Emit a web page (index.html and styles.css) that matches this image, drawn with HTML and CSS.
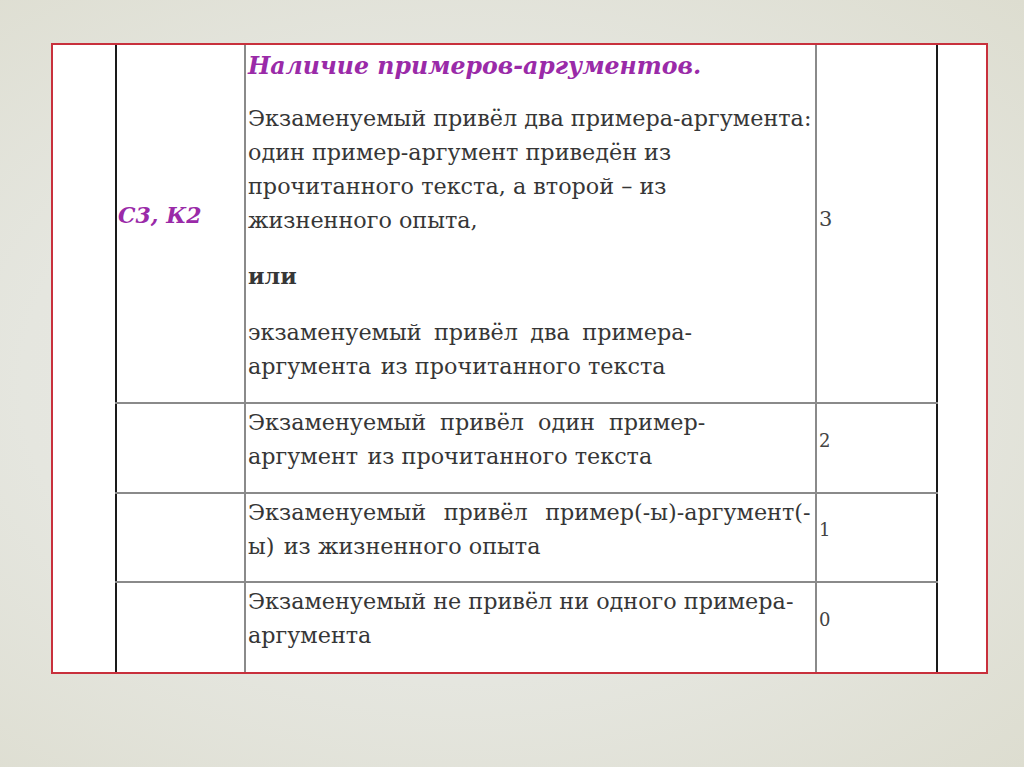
FILE: index.html
```html
<!DOCTYPE html>
<html lang="ru">
<head>
<meta charset="utf-8">
<title>Критерии</title>
<link rel="stylesheet" href="styles.css">
</head>
<body>
<div class="slide">
  <div class="frame">
    <div class="side"></div>
    <table class="crit">
      <colgroup>
        <col class="c-code">
        <col class="c-text">
        <col class="c-score">
      </colgroup>
      <tr class="r1">
        <td class="code">С3, К2</td>
        <td class="text">
          <div class="head">Наличие примеров-аргументов.</div>
          <p>Экзаменуемый привёл два примера-аргумента:<br>один пример-аргумент приведён из<br>прочитанного текста, а второй – из<br>жизненного опыта,</p>
          <p class="or">или</p>
          <p><span class="ws-a">экзаменуемый привёл два примера-</span><br><span class="ws-s">аргумента из</span> прочитанного текста</p>
        </td>
        <td class="score big">3</td>
      </tr>
      <tr class="r2">
        <td></td>
        <td class="text"><p><span class="ws-b">Экзаменуемый привёл один пример-</span><br><span class="ws-s">аргумент из</span> прочитанного текста</p></td>
        <td class="score">2</td>
      </tr>
      <tr class="r3">
        <td></td>
        <td class="text"><p><span class="ws-c">Экзаменуемый привёл пример(-ы)-аргумент(-</span><br><span class="ws-s">ы) из</span> жизненного опыта</p></td>
        <td class="score">1</td>
      </tr>
      <tr class="r4">
        <td></td>
        <td class="text"><p>Экзаменуемый не привёл ни одного примера-<br>аргумента</p></td>
        <td class="score">0</td>
      </tr>
    </table>
    <div class="side"></div>
  </div>
</div>
</body>
</html>
```

FILE: styles.css
```css
html, body {
  margin: 0;
  padding: 0;
}
body {
  width: 1024px;
  height: 767px;
  overflow: hidden;
  background: radial-gradient(ellipse at 45% 50%, #e9e9e7 0%, #e5e6df 55%, #ddddd0 100%);
  font-family: "DejaVu Serif", "Liberation Serif", serif;
  color: #363636;
}
.slide {
  padding: 43px 0 0 51px;
}
.frame {
  display: flex;
  width: 933px;
  height: 627px;
  border: 2px solid #c8303c;
  background: #fff;
  overflow: hidden;
}
.side {
  flex: 1;
}
.frame .side:first-child {
  flex: 0 0 62px;
}
.crit {
  border-collapse: collapse;
  table-layout: fixed;
  width: 821px;
  height: 627px;
  border-left: 2px solid #1a1a1a;
  border-right: 2px solid #1a1a1a;
}
.c-code { width: 129px; }
.c-text { width: 571px; }
.c-score { width: 121px; }
.crit td {
  border-top: 2px solid #8a8a8a;
  border-left: 2px solid #8a8a8a;
  padding: 0;
}
.crit tr:first-child td { border-top: none; }
.crit td:first-child { border-left: none; }
.r1 { height: 358px; }
.r2 { height: 90px; }
.r3 { height: 89px; }
.code {
  vertical-align: middle;
  padding: 0 0 18px 1px !important;
  color: #9a2aa8;
  font-weight: bold;
  font-style: italic;
  font-size: 22px;
}
.score {
  vertical-align: middle;
  padding: 0 0 16px 2px !important;
  font-size: 18px;
  color: #444;
}
.score.big {
  font-size: 21px;
  padding-bottom: 10px !important;
}
.text {
  vertical-align: top;
  padding: 1px 0 0 2px !important;
  font-size: 22.3px;
  line-height: 34px;
  white-space: nowrap;
}
.r1 .text {
  padding-top: 0 !important;
}
.head {
  color: #9a2aa8;
  font-weight: bold;
  font-style: italic;
  font-size: 23.6px;
  padding-top: 4px;
  margin-bottom: 18px;
}
.text p {
  margin: 0 0 22px 0;
}
.text p:last-child {
  margin-bottom: 0;
}
.text .or {
  font-weight: bold;
}
.ws-a { word-spacing: 0.24em; }
.ws-b { word-spacing: 0.31em; }
.ws-c { word-spacing: 0.47em; }
.ws-s { word-spacing: 0.1em; }
```
